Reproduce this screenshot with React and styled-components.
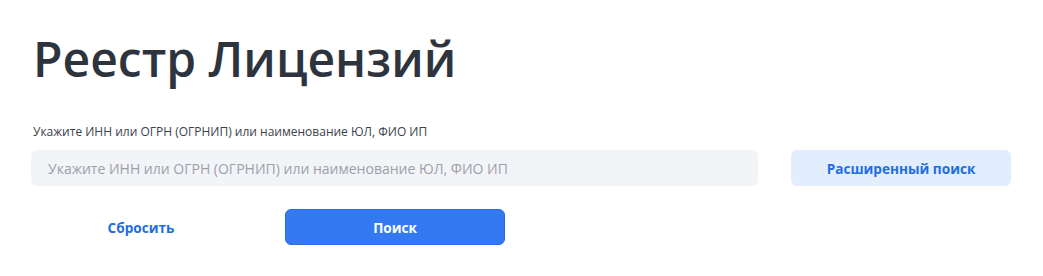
import React from "react";
import styled, { createGlobalStyle } from "styled-components";

const Global = createGlobalStyle`
  html, body { margin: 0; padding: 0; background: #ffffff; }
  body { font-family: "Open Sans", "Noto Sans", sans-serif; -webkit-font-smoothing: antialiased; }
  * { box-sizing: border-box; }
`;

const Page = styled.div`
  padding: 29px 32px 0 31px;
  width: 1043px;
`;

const Title = styled.h1`
  margin: 0 0 0 2px;
  font-size: 48px;
  line-height: 60px;
  font-weight: 600;
  color: #2e343e;
`;

const Form = styled.form`
  margin-top: 35px;
  display: flex;
  flex-direction: column;
`;

const Label = styled.label`
  display: block;
  margin-left: 2px;
  font-size: 12px;
  line-height: 16px;
  color: #3b414b;
  margin-bottom: 10px;
`;

const Row = styled.div`
  display: grid;
  grid-template-columns: 727px 220px;
  column-gap: 33px;
`;

const Input = styled.input`
  height: 36px;
  border: none;
  outline: none;
  border-radius: 6px;
  background: #f2f4f8;
  padding: 0 17px;
  font-family: inherit;
  font-size: 14px;
  color: #2e343e;
  &::placeholder { color: #9ca1a9; }
`;

const Button = styled.button`
  height: 36px;
  border-radius: 6px;
  font-family: inherit;
  font-size: 13.6px;
  font-weight: 700;
  cursor: pointer;
  border: 1px solid ${(p) => (p.$variant === "primary" ? "#2b6de0" : "transparent")};
  background: ${(p) =>
    p.$variant === "primary" ? "#3479f2" : p.$variant === "soft" ? "#e2edfd" : "transparent"};
  color: ${(p) => (p.$variant === "primary" ? "#ffffff" : "#1e6de3")};
`;

const Actions = styled.div`
  margin-top: 23px;
  display: grid;
  grid-template-columns: 220px 220px;
  column-gap: 34px;
`;

export default function App() {
  return (
    <>
      <Global />
      <Page>
        <Title>Реестр Лицензий</Title>
        <Form onSubmit={(e) => e.preventDefault()}>
          <Label htmlFor="q">Укажите ИНН или ОГРН (ОГРНИП) или наименование ЮЛ, ФИО ИП</Label>
          <Row>
            <Input id="q" placeholder="Укажите ИНН или ОГРН (ОГРНИП) или наименование ЮЛ, ФИО ИП" />
            <Button type="button" $variant="soft">Расширенный поиск</Button>
          </Row>
          <Actions>
            <Button type="reset" $variant="link">Сбросить</Button>
            <Button type="submit" $variant="primary">Поиск</Button>
          </Actions>
        </Form>
      </Page>
    </>
  );
}
